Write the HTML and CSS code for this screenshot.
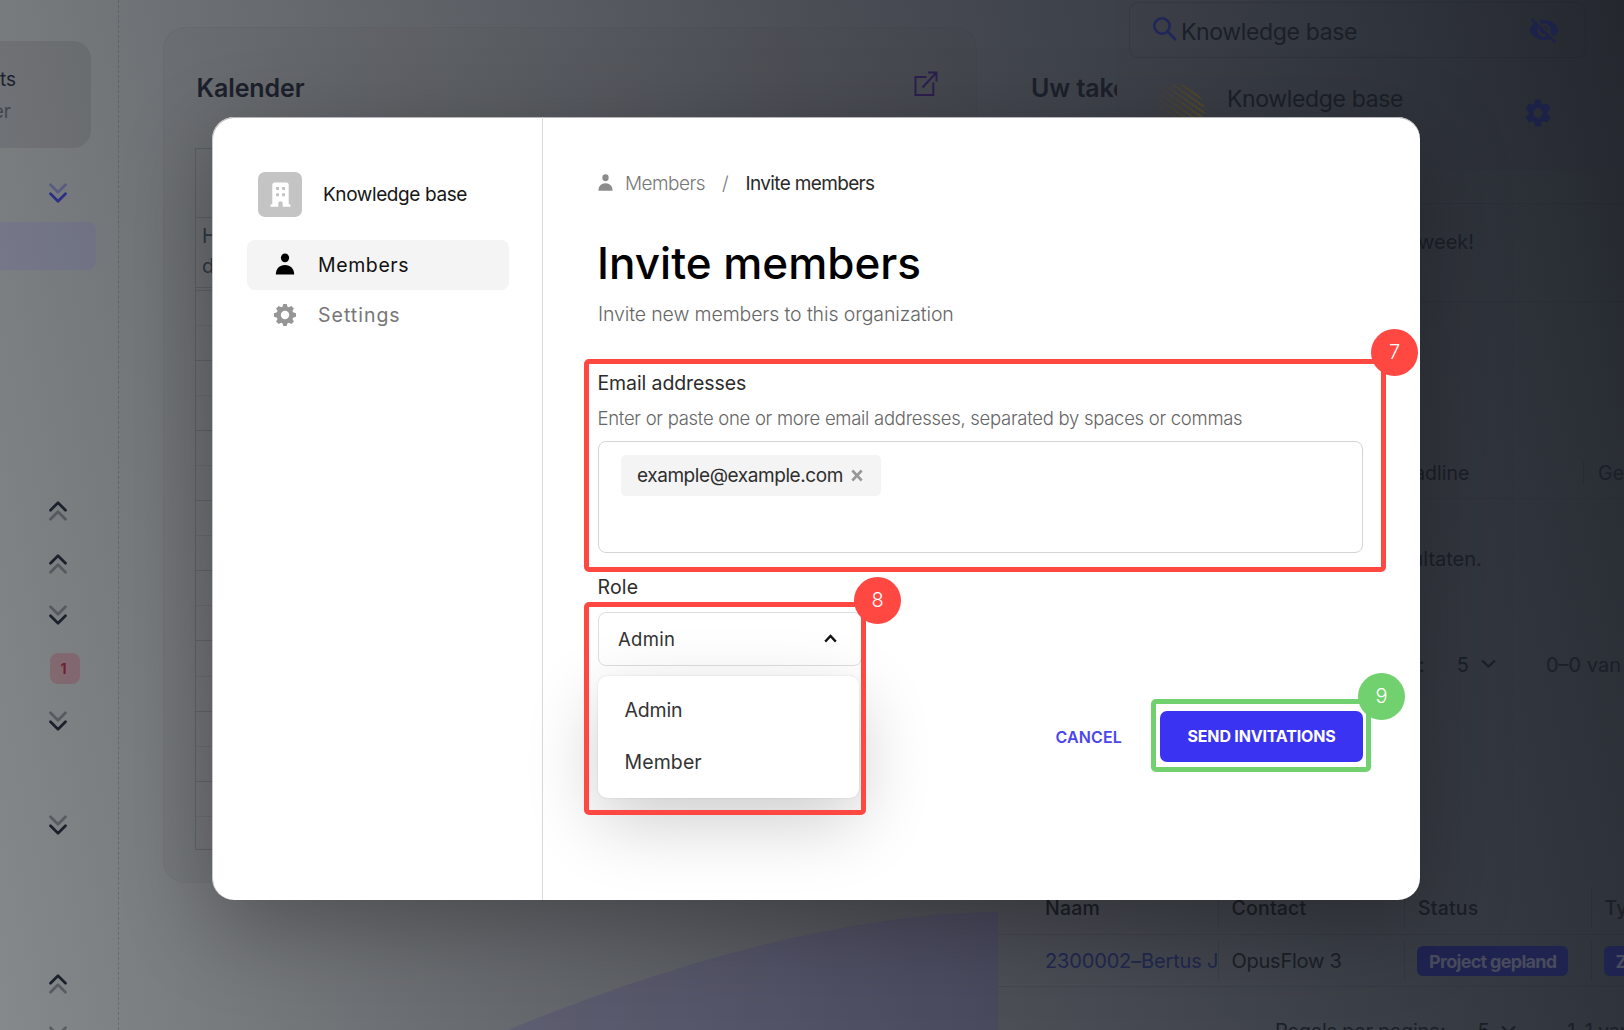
FILE: index.html
```html
<!DOCTYPE html>
<html lang="en">
<head>
<meta charset="utf-8">
<title>Invite members</title>
<link rel="stylesheet" href="styles.css">
</head>
<body>
<svg width="0" height="0" class="defs">
  <symbol id="dbl-down" viewBox="0 0 18 21"><path d="M1.5 1.8 9 9.3l7.500-7.500" opacity=".4"/><path d="M1.500 10.800 9 18.300l7.500-7.500"/></symbol>
  <symbol id="dbl-up" viewBox="0 0 18 21"><path d="M1.500 19.200 9 11.700l7.500 7.500" opacity=".4"/><path d="M1.500 10.200 9 2.700l7.500 7.500"/></symbol>
  <symbol id="person" viewBox="0 0 20 24"><ellipse cx="10" cy="5.300" rx="4.500" ry="4.800"/><path d="M0 23.500C0 17 4 13 10 13s10 4 10 10.500z"/></symbol>
  <symbol id="cog" viewBox="0 0 24 24"><path d="M19.140 12.940c.040-.300.060-.610.060-.940s-.020-.640-.070-.940l2.030-1.580a.490.490 0 0 0 .120-.610l-1.920-3.320a.488.488 0 0 0-.590-.220l-2.390.960a7 7 0 0 0-1.620-.940l-.360-2.540A.484.484 0 0 0 13.920 2.400h-3.840c-.240 0-.430.170-.470.410l-.360 2.540c-.590.240-1.130.570-1.620.940l-2.390-.960a.48.48 0 0 0-.590.220L2.740 8.870a.48.48 0 0 0 .120.610l2.030 1.580c-.050.300-.090.630-.090.940s.020.640.070.940l-2.030 1.580a.49.49 0 0 0-.120.610l1.920 3.320c.120.220.370.290.590.220l2.390-.960c.500.380 1.030.700 1.620.940l.360 2.540c.050.240.240.410.480.410h3.840c.240 0 .440-.170.470-.410l.360-2.540a7 7 0 0 0 1.620-.940l2.390.960c.220.080.470 0 .590-.220l1.920-3.320a.48.48 0 0 0-.120-.610zM12 15.600A3.600 3.600 0 1 1 12 8.400a3.600 3.600 0 0 1 0 7.200z"/></symbol>
</svg>

<div class="app">
  <aside class="rail">
    <div class="user"><span class="user-name">ts</span><span class="user-role">er</span></div>
    <svg class="dbl accent"><use href="#dbl-down"/></svg>
    <div class="rail-active"></div>
    <div class="rail-icons">
      <svg class="dbl"><use href="#dbl-up"/></svg>
      <svg class="dbl"><use href="#dbl-up"/></svg>
      <svg class="dbl"><use href="#dbl-down"/></svg>
      <span class="count">1</span>
      <svg class="dbl"><use href="#dbl-down"/></svg>
      <svg class="dbl gap-lg"><use href="#dbl-down"/></svg>
      <svg class="dbl gap-xl"><use href="#dbl-up"/></svg>
      <svg class="dbl"><use href="#dbl-down"/></svg>
    </div>
  </aside>

  <section class="calendar">
    <header class="calendar-head">
      <h2>Kalender</h2>
      <svg class="open" viewBox="0 0 24 25"><path d="M12.500 6H1.500v18h17.800V11.500M8.500 16.500 22 2M14 1.500h8.500V10.500"/></svg>
    </header>
    <div class="slots">
      <div class="slot top"></div>
      <div class="slot event"><span>H</span><span>d</span></div>
      <div class="slot sep"></div>
      <div class="slot dot"></div><div class="slot"></div><div class="slot dot"></div><div class="slot"></div>
      <div class="slot dot"></div><div class="slot"></div><div class="slot dot"></div><div class="slot"></div>
      <div class="slot dot"></div><div class="slot"></div><div class="slot dot"></div><div class="slot"></div>
      <div class="slot dot"></div><div class="slot"></div><div class="slot dot"></div><div class="slot"></div>
    </div>
  </section>
  <svg class="wave" viewBox="0 0 490 118" preserveAspectRatio="none"><path d="M0 118C150 56 330 2 490 0V118Z"/></svg>

  <section class="tasks">
    <h2 class="tasks-title">Uw taken</h2>
    <div class="greeting"><span>week!</span></div>
    <div class="task-head"><span class="th deadline">Deadline</span><span class="th ge">Ge</span></div>
    <div class="task-empty">resultaten.</div>
    <div class="pager"><span>:</span><span>5</span><svg class="caret" viewBox="0 0 16 10"><path d="m1.500 1.500 6.500 6 6.500-6"/></svg><span class="range">0–0 van</span></div>
    <div class="grid-row head"><span>Naam</span><span>Contact</span><span>Status</span><span>Ty</span></div>
    <div class="grid-row"><span class="link">2300002–Bertus J</span><span>OpusFlow 3</span><span><b class="pill">Project gepland</b></span><span><b class="pill">Z</b></span></div>
    <div class="pager foot"><span>Regels per pagina:</span><span>5</span><svg class="caret" viewBox="0 0 16 10"><path d="m1.500 1.500 6.500 6 6.500-6"/></svg><span class="range">1–1 van</span></div>
  </section>

  <div class="drawer">
    <div class="search">
      <svg class="search-ico" viewBox="0 0 24 24"><circle cx="9" cy="9" r="7.700"/><path d="m14.600 14.600 8.200 8.400"/></svg>
      <span>Knowledge base</span>
      <svg class="eye" viewBox="0 0 24 24"><path d="M12 7c2.760 0 5 2.240 5 5 0 .650-.130 1.260-.360 1.830l2.920 2.920c1.510-1.260 2.700-2.890 3.430-4.750-1.730-4.390-6-7.500-11-7.500-1.400 0-2.740.250-3.980.700l2.160 2.160C10.740 7.130 11.350 7 12 7zM2 4.270l2.280 2.280.460.460C3.080 8.300 1.780 10.020 1 12c1.730 4.390 6 7.500 11 7.500 1.550 0 3.030-.300 4.380-.840l.420.420L19.730 22 21 20.730 3.270 3 2 4.270zM7.530 9.800l1.550 1.550c-.050.210-.080.430-.080.650 0 1.660 1.340 3 3 3 .220 0 .440-.030.650-.080l1.550 1.550c-.670.330-1.410.530-2.200.530-2.760 0-5-2.240-5-5 0-.790.200-1.530.530-2.200zm4.310-.780 3.150 3.150.020-.160c0-1.660-1.340-3-3-3l-.170.010z"/></svg>
    </div>
    <div class="org-item">
      <span class="stripes"></span>
      <span class="org-item-name">Knowledge base</span>
      <svg class="org-cog" viewBox="2 2 20 20" preserveAspectRatio="none"><use href="#cog" width="24" height="24"/></svg>
    </div>
  </div>
</div>

<div class="modal">
  <aside class="side">
    <div class="org">
      <span class="org-tile"><svg viewBox="0 0 20 25"><path fill-rule="evenodd" d="M1.800 22V3Q1.800.5 4.300.5h11.400Q18.200.5 18.200 3v19Q20 22.200 20 23.500V24.800H12.200V21.500Q12.200 19.300 10 19.300T7.800 21.500V24.800H0V23.500Q0 22.200 1.800 22ZM5.500 5v3h3V5zm6 0v3h3V5zm-6 6.200v3h3v-3zm6 0v3h3v-3z"/></svg></span>
      <span>Knowledge base</span>
    </div>
    <nav>
      <a class="nav-item active"><svg class="nav-person"><use href="#person"/></svg>Members</a>
      <a class="nav-item"><svg class="nav-cog" viewBox="0 0 22 22"><path fill-rule="evenodd" d="m9.300 0h3.400l.800 2.800 1.300.500 2.600-1.400 2.500 2.500-1.400 2.600.500 1.300 3 .900v3.600l-3 .900-.500 1.300 1.400 2.600-2.500 2.500-2.600-1.400-1.300.500-.800 2.800H9.300l-.800-2.800-1.300-.500-2.600 1.400-2.500-2.500 1.400-2.600-.500-1.300-3-.900V9.200l3-.900.500-1.300L2.100 4.400l2.500-2.500 2.600 1.400 1.300-.500zM11 6.800a4.200 4.200 0 1 0 0 8.400 4.200 4.200 0 0 0 0-8.400z"/></svg>Settings</a>
    </nav>
  </aside>

  <main class="main">
    <div class="crumbs">
      <svg class="crumb-ico"><use href="#person"/></svg>
      <span class="crumb">Members</span><span class="slash">/</span><span class="here">Invite members</span>
    </div>
    <h1>Invite members</h1>
    <p class="sub">Invite new members to this organization</p>
    <label class="label emails">Email addresses</label>
    <p class="hint">Enter or paste one or more email addresses, separated by spaces or commas</p>
    <div class="area">
      <span class="chip">example@example.com<svg viewBox="0 0 12 12" preserveAspectRatio="none"><path d="m1.300 1.300 9.400 9.400M10.700 1.300 1.300 10.700"/></svg></span>
    </div>
    <label class="label role">Role</label>
    <div class="select">
      <span>Admin</span>
      <svg viewBox="0 0 13 9"><path d="M1.200 7.600 6.500 2l5.300 5.600"/></svg>
      <div class="menu"><span class="opt-a">Admin</span><span>Member</span></div>
    </div>
    <div class="actions">
      <span class="cancel">CANCEL</span>
      <span class="send">SEND INVITATIONS</span>
    </div>
  </main>
</div>

<div class="mark mark-7"><span class="num">7</span></div>
<div class="mark mark-8"><span class="num">8</span></div>
<div class="mark mark-9"><span class="num">9</span></div>
</body>
</html>
```
FILE: styles.css
```css
* { box-sizing: border-box; }
body {
  margin: 0;
  width: 1624px;
  height: 1030px;
  overflow: hidden;
  position: relative;
  font-family: Inter, "Open Sans", sans-serif;
  white-space: nowrap;
}
h1, h2, p { margin: 0; }
svg { display: block; flex: none; }
.defs { position: absolute; }

/* dimmed application behind the dialog */
.app {
  position: relative;
  display: flex;
  width: 1624px;
  height: 1030px;
  overflow: hidden;
  color: #1d222c;
  background: linear-gradient(78deg, #86898c 0%, #787b7e 12%, #6b6e72 22.700%, #585b61 42.300%, #4a4d54 56.400%, #3c4048 72.700%, #2b2f36 93.300%, #23262d 100%);
}
.rail {
  width: 119px;
  flex: none;
  border-right: 1px dashed rgba(50, 56, 64, .3);
  padding-top: 41px;
}
.user {
  width: 91px;
  height: 107px;
  border-radius: 0 18px 18px 0;
  background: rgba(50, 52, 60, .14);
  padding-top: 24px;
  display: flex;
  flex-direction: column;
}
.user-name { font-size: 19px; line-height: 30px; width: 16px; direction: rtl; }
.user-role { font-size: 19px; line-height: 34px; width: 11px; direction: rtl; color: #42464f; }
.dbl {
  width: 18px;
  height: 21px;
  fill: none;
  stroke: #1b212c;
  stroke-width: 2.700;
  stroke-linecap: round;
  stroke-linejoin: round;
}
.rail > .dbl { margin: 35px 0 0 49px; }
.dbl.accent { stroke: #2a2f86; }
.rail-active {
  width: 96px;
  height: 48px;
  margin-top: 18px;
  border-radius: 0 8px 8px 0;
  background: rgba(95, 95, 165, .22);
}
.rail-icons { display: flex; flex-direction: column; padding: 230px 0 0 49px; }
.rail-icons .dbl { margin-bottom: 31.500px; }
.count {
  width: 30px;
  height: 31px;
  margin: -5px 0 27.500px 1px;
  border-radius: 8px;
  background: rgba(135, 75, 88, .45);
  color: #6d2233;
  font: 700 14px/31px Inter, sans-serif;
  text-align: center;
  padding-right: 3px;
}
.rail-icons .gap-lg { margin-top: 51px; }
.rail-icons .gap-xl { margin-top: 106px; }

.calendar {
  width: 814px;
  height: 856px;
  flex: none;
  margin: 27px 0 0 44px;
  padding-left: 31px;
  border: 1px solid rgba(40, 44, 52, .04);
  border-radius: 22px;
  background: rgba(60, 60, 66, .05);
}
.calendar-head { display: flex; justify-content: space-between; height: 120px; padding: 44px 38px 0 1.500px; }
h2 { font-weight: 600; font-size: 25px; line-height: 32px; color: #1c202b; letter-spacing: -.1px; }
.open { width: 24px; height: 25px; margin-top: -1px; fill: none; stroke: #2c1f4e; stroke-width: 2; }
.slots { border: 1px solid rgba(35, 42, 50, .22); border-right: 0; width: 600px; }
.slot { height: 35.100px; border-bottom: 1px solid rgba(35, 42, 50, .2); }
.slot.dot { border-bottom: 1px dotted rgba(35, 42, 50, .2); }
.slot.top { height: 68.500px; }
.slot.event { height: 70px; padding: 3px 0 0 6px; font-size: 20px; line-height: 30px; color: #2e363f; display: flex; flex-direction: column; }
.slot.sep { height: 3px; }
.slot:last-child { border-bottom: 0; height: 32px; }
.wave { position: absolute; left: 508px; top: 912px; width: 490px; height: 118px; fill: rgba(62, 54, 125, .22); }

.tasks { width: 626px; margin-left: 21px; flex: none; font-size: 20px; color: #1b1f27; }
.tasks-title { height: 175px; line-height: 176px; padding-left: 33px; }
.greeting { margin-top: 28px; height: 99px; border: solid rgba(20, 22, 28, .1); border-width: 1px 0; line-height: 76px; padding-left: 420px; }
.task-head { display: flex; margin-top: 145px; height: 52px; align-items: center; border-bottom: 1px solid rgba(20, 22, 28, .06); padding-left: 390.500px; font-size: 19.500px; }
.deadline { width: 200px; border-right: 1px solid rgba(20, 22, 28, .16); }
.ge { padding-left: 14px; }
.task-empty { height: 121px; line-height: 121px; padding-left: 384px; }
.pager { display: flex; align-items: center; height: 90px; padding-left: 421px; }
.pager span + span { margin-left: 32px; }
.caret { width: 17px; height: 10px; margin: -3px 0 0 11px; fill: none; stroke: #1b1f27; stroke-width: 2.200; }
.pager span.range { margin-left: 49px; }
.grid-row { display: flex; height: 52px; padding-left: 34px; align-items: center; border-bottom: 1px solid rgba(20, 22, 28, .1); }
.grid-row span { width: 186.500px; flex: none; padding-left: 13px; border-right: 1px solid rgba(20, 22, 28, .12); overflow: hidden; height: 40px; line-height: 40px; letter-spacing: -.25px; }
.grid-row.head { margin-top: 172px; height: 53px; font-weight: 500; font-size: 19.500px; }
.grid-row.head span { letter-spacing: .2px; }
.grid-row .link { color: #222750; letter-spacing: -.15px; }
.pill {
  display: inline-block;
  height: 30px;
  line-height: 31px;
  padding: 0 12px;
  margin: 4px 0 0 -1px;
  border-radius: 6px;
  background: #1f2350;
  color: #484b5c;
  font-size: 18px;
  letter-spacing: -.7px;
}
.pager.foot { padding-left: 277px; height: 88px; letter-spacing: -.3px; }
.pager.foot .range { margin-left: 50px; }

.drawer {
  position: absolute;
  left: 1117px;
  top: 0;
  width: 507px;
  height: 170px;
  padding: 2px 38px 0 12px;
  color: #1b1f28;
  font-size: 23px;
  letter-spacing: -.35px;
  background: linear-gradient(78deg, #3e4149, #31353d 50%, #24272e);
}
.search { display: flex; align-items: center; height: 56px; border: 1px solid rgba(20, 22, 30, .14); border-radius: 9px; padding: 4px 25px 0 23px; }
.search-ico { width: 24px; height: 24px; margin: -6px 4px 0 0; fill: none; stroke: #20265a; stroke-width: 2.600; }
.eye { width: 32px; height: 32px; margin: -5px 0 0 auto; fill: #1d224a; }
.org-item { display: flex; height: 80px; }
.stripes {
  width: 56px;
  height: 56px;
  border-radius: 50%;
  margin: 26px 22px 0 20px;
  background: repeating-linear-gradient(35deg, transparent 0 3px, #51462a 3px 5px);
  mask-image: linear-gradient(90deg, transparent 5%, #000 85%);
}
.org-item-name { line-height: 30px; margin: 26px auto 0 0; }
.org-cog { width: 26px; height: 28px; margin: 41px 35px 0 0; fill: #1c2148; }

/* dialog */
.modal {
  position: absolute;
  left: 212px;
  top: 117px;
  width: 1207.500px;
  height: 783px;
  display: flex;
  background: #fff;
  border-radius: 22px;
  border-left: 1px solid #c9c9cb;
  box-shadow: inset 0 1px #b5b5b7, 0 25px 90px rgba(0, 0, 0, .3);
}
.side { width: 330px; border-right: 1px solid #dadada; padding: 55px 0 0 34px; }
.org { display: flex; align-items: center; gap: 21px; height: 45px; padding-left: 11px; font-size: 19px; letter-spacing: -.4px; color: #161616; }
.org-tile { width: 44px; height: 45px; border-radius: 7px; background: #c4c4c4; display: flex; align-items: center; justify-content: center; }
.org-tile svg { width: 21px; height: 25px; fill: #fff; }
nav { margin-top: 23px; }
.nav-item { display: flex; align-items: center; width: 262px; height: 50px; border-radius: 8px; padding-left: 27px; font-size: 19.500px; letter-spacing: 1px; color: #777; }
.nav-item.active { background: #f4f4f4; color: #111; letter-spacing: .6px; }
.nav-person { width: 20px; height: 22px; margin: -2px 23px 0 1px; }
.nav-cog { width: 22px; height: 22px; margin-right: 22px; fill: #969696; }

.main { flex: 1; padding: 54px 56.500px 0 55px; display: flex; flex-direction: column; }
.crumbs { display: flex; align-items: center; height: 24px; font-size: 19px; letter-spacing: -.55px; }
.crumb-ico { width: 15px; height: 17px; margin: -2px 12px 0 0; fill: #8c8c8c; }
.crumb { color: #777; font-weight: 300; }
.slash { margin: 0 17px; color: #777; font-weight: 300; letter-spacing: 0; }
.here { color: #2a2a2a; letter-spacing: -.65px; }
h1 { margin: 38px 0 8px -1px; font-weight: 550; font-size: 44px; line-height: 61px; letter-spacing: 0; }
.sub { font-weight: 300; font-size: 19.500px; line-height: 24px; letter-spacing: -.12px; color: #666; }
.label { font-size: 19.500px; line-height: 24px; color: #2c2c2c; margin-left: -.5px; }
.emails { margin-top: 45px; letter-spacing: -.1px; }
.hint { margin: 11px 0 11px -.5px; font-weight: 300; font-size: 18.500px; line-height: 24px; letter-spacing: -.28px; color: #666; }
.area { height: 112px; border: 1px solid #d4d4d4; border-radius: 8px; padding: 13px 22px; }
.chip { display: flex; align-items: center; width: 260px; height: 41px; border-radius: 5px; background: #f4f4f4; padding-left: 16px; font-size: 19px; letter-spacing: -.43px; color: #2e2e2e; }
.chip svg { width: 12px; height: 13px; margin-left: 8px; fill: none; stroke: #979797; stroke-width: 2.600; }
.role { margin: 22px 0 13px -.5px; letter-spacing: .2px; }
.select { position: relative; display: flex; align-items: center; justify-content: space-between; width: 264px; height: 54px; padding: 0 24px 1px 19px; border: 1.500px solid #dedede; border-radius: 8px; font-size: 18.500px; letter-spacing: .3px; color: #333; }
.select > svg { width: 13px; height: 9px; fill: none; stroke: #111; stroke-width: 2.300; }
.menu {
  position: absolute;
  left: -1px;
  top: 63px;
  width: 261px;
  height: 122px;
  padding: 9px 0 0 26.500px;
  display: flex;
  flex-direction: column;
  background: #fff;
  border-radius: 9px;
  font-size: 19.500px;
  line-height: 51.500px;
  letter-spacing: .1px;
  box-shadow: 0 0 2px rgba(0, 0, 0, .14), 0 24px 72px rgba(0, 0, 0, .2);
}
.opt-a { letter-spacing: -.2px; }
.actions { display: flex; align-items: center; justify-content: flex-end; margin-top: 45px; gap: 38px; font-size: 16px; }
.cancel { font-weight: 600; color: #4b45ee; letter-spacing: .15px; }
.send { width: 203px; height: 51px; border-radius: 7px; background: #3a34f2; color: #fff; font-weight: 700; line-height: 51px; text-align: center; letter-spacing: -.18px; }

/* numbered step callouts */
.mark { position: absolute; border: 5px solid #ff4842; border-radius: 5px; }
.num {
  position: absolute;
  width: 47px;
  height: 47px;
  border-radius: 50%;
  background: #ff4842;
  color: #fff;
  font-weight: 300;
  font-size: 20px;
  line-height: 47px;
  text-align: center;
}
.mark-7 { left: 584px; top: 359px; width: 802px; height: 213px; }
.mark-7 .num { left: 782px; top: -35px; }
.mark-8 { left: 584px; top: 602px; width: 282px; height: 213px; }
.mark-8 .num { left: 265px; top: -30px; }
.mark-9 { left: 1151px; top: 699px; width: 220px; height: 73px; border-color: #71d16f; }
.mark-9 .num { left: 202px; top: -31px; background: #71d16f; }
```
